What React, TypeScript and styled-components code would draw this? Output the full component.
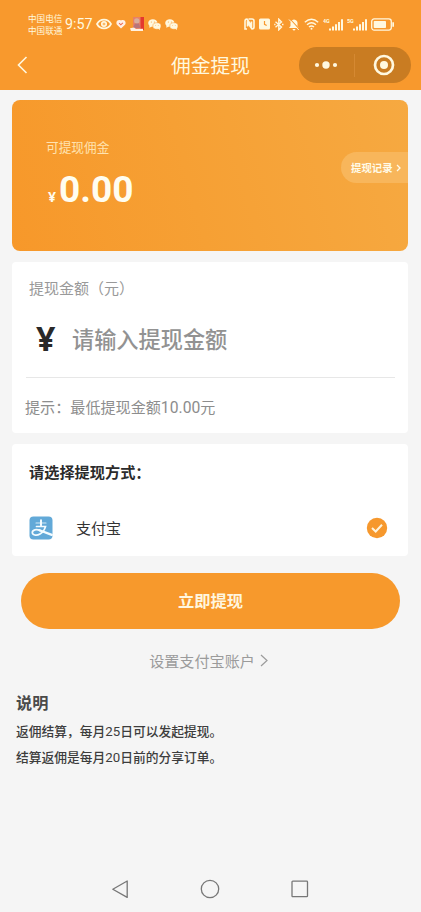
import React from 'react';
import styled, { createGlobalStyle } from 'styled-components';

const Global = createGlobalStyle`
  * { box-sizing: border-box; }
  body {
    margin: 0;
    background: #f5f5f5;
    font-family: "Noto Sans CJK SC", sans-serif;
  }
`;

const Screen = styled.div`
  width: 421px;
  height: 912px;
  display: flex;
  flex-direction: column;
  overflow: hidden;
  background: #f5f5f5;
`;

const Header = styled.header`
  height: 90px;
  flex: none;
  background: #f8992d;
  color: #fff8df;
`;

const StatusBar = styled.div`
  height: 40px;
  padding: 8px 27px 0 28px;
  display: flex;
  justify-content: space-between;
`;

const StatusGroup = styled.div<{ $gap: number }>`
  height: 32px;
  display: flex;
  align-items: center;
  gap: ${p => p.$gap}px;
  svg { flex: none; display: block; }
`;

const Carriers = styled.div`
  width: 35px;
  font-size: 8.6px;
  line-height: 12.5px;
  white-space: nowrap;
`;

const Clock = styled.span`
  width: 29px;
  font: 400 14.3px/20px Roboto, sans-serif;
  white-space: nowrap;
`;

const TitleBar = styled.div`
  height: 50px;
  padding: 0 10px 0 17px;
  display: grid;
  grid-template-columns: 1fr auto 1fr;
  align-items: center;
  svg { display: block; }
`;

const Title = styled.h1`
  margin: 0;
  padding-right: 7px;
  font-size: 19.8px;
  line-height: 30px;
  font-weight: 400;
`;

const Capsule = styled.div`
  justify-self: end;
  width: 112px;
  height: 36px;
  border-radius: 18px;
  background: #c97c22;
  display: flex;
  align-items: center;
`;

const CapsuleHalf = styled.div`
  flex: 1;
  display: flex;
  justify-content: center;
  & + & {
    border-left: 1px solid #d58932;
    height: 23px;
    align-items: center;
    padding-left: 2px;
  }
`;

const Content = styled.main`
  flex: 1;
  padding: 10px 13px 0 12px;
  display: flex;
  flex-direction: column;
`;

const BalanceCard = styled.section`
  height: 151px;
  border-radius: 8px;
  background: linear-gradient(75deg, #f7982a 0%, #f6a034 45%, #f6a941 100%);
  padding-left: 34px;
  display: flex;
  justify-content: space-between;
`;

const Balance = styled.div`
  padding-top: 37px;
  color: #fff;
`;

const BalanceLabel = styled.div`
  font-size: 12.7px;
  line-height: 20px;
  color: #ffe3b0;
`;

const Amount = styled.div`
  display: flex;
  align-items: baseline;
  margin-top: 8px;
  padding-left: 2px;
  font: 700 37px/50px Roboto, sans-serif;
  color: #fffdf0;
`;

const SmallYen = styled.span`
  width: 11px;
  font-family: "Noto Sans", sans-serif;
  font-size: 14px;
  line-height: 20px;
`;

const Records = styled.button`
  margin: 52px 0 0;
  border: 0;
  width: 67px;
  height: 31px;
  padding: 0 0 0 10px;
  border-radius: 16px 0 0 16px;
  background: #f8b65b;
  color: #fffbe8;
  font: 700 10.4px/20px "Noto Sans CJK SC", sans-serif;
  display: flex;
  align-items: center;
  gap: 3px;
  white-space: nowrap;
`;

const Panel = styled.section<{ $height: number }>`
  margin-top: 11px;
  height: ${p => p.$height}px;
  border-radius: 4px;
  background: #fff;
`;

const FieldLabel = styled.div`
  padding: 14px 0 0 17px;
  font-size: 15px;
  line-height: 24px;
  color: #999;
`;

const FieldRow = styled.div`
  height: 78px;
  margin: 0 13px 0 14px;
  padding: 0 0 2px 10px;
  border-bottom: 1px solid #e7e7e7;
  display: flex;
  align-items: center;
`;

const Yen = styled.span`
  width: 36px;
  font: 700 34px/40px "Noto Sans", sans-serif;
  color: #292929;
`;

const Placeholder = styled.span`
  font-size: 22.2px;
  line-height: 34px;
  font-weight: 500;
  color: #929292;
`;

const Hint = styled.div`
  padding: 16px 0 0 13px;
  font-size: 15.1px;
  line-height: 24px;
  color: #8d8d8d;
`;

const Digits = styled.span`
  font-family: Roboto, sans-serif;
  font-size: 1.04em;
  font-weight: 400;
  line-height: 1;
`;

const MethodTitle = styled.h2`
  margin: 0;
  padding: 15px 0 0 17px;
  font-size: 15.2px;
  line-height: 24px;
  font-weight: 700;
  color: #2b2b2b;
`;

const Method = styled.div`
  height: 24px;
  margin-top: 33px;
  padding: 0 20px 0 17px;
  display: flex;
  align-items: center;
  font-size: 15px;
  color: #333;
  svg { display: block; flex: none; }
`;

const MethodName = styled.span`
  flex: 1;
  padding-left: 23px;
  line-height: 24px;
`;

const Submit = styled.button`
  margin: 17px 8px 0 9px;
  height: 56px;
  flex: none;
  border: 0;
  border-radius: 28px;
  background: #f7992c;
  color: #fff6df;
  padding: 0 0 2px;
  font: 700 16.3px/24px "Noto Sans CJK SC", sans-serif;
`;

const AccountLink = styled.div`
  margin-top: 19px;
  height: 24px;
  display: flex;
  justify-content: center;
  align-items: center;
  gap: 5px;
  font-size: 15.1px;
  line-height: 24px;
  color: #9b9b9b;
  padding-right: 3px;
`;

const Notes = styled.section`
  padding: 17px 0 0 4px;
  color: #3d3d3d;
`;

const NotesTitle = styled.h2`
  margin: 0 0 3px;
  font-size: 16.2px;
  line-height: 26px;
  font-weight: 700;
  color: #4a4a4a;
`;

const Note = styled.p`
  margin: 0;
  font-size: 12.75px;
  line-height: 26px;
  font-weight: 500;
`;

const SystemNav = styled.nav`
  height: 46px;
  flex: none;
  display: flex;
  justify-content: center;
  gap: 70px;
  padding: 13px 2px 0 0;
`;

const Chevron = ({ w, h, stroke }: { w: number; h: number; stroke: number }) => (
  <svg width={w} height={h} viewBox={`0 0 ${w} ${h}`} fill="none" stroke="currentColor" strokeWidth={stroke}>
    <path d={`M1 1 L${w - 1} ${h / 2} L1 ${h - 1}`} />
  </svg>
);

const Eye = () => (
  <svg width="16" height="12" viewBox="0 0 16 12" fill="none" stroke="currentColor" strokeWidth="1.7">
    <path d="M1 6C4 .2 12 .2 15 6C12 11.8 4 11.8 1 6Z" />
    <circle cx="8" cy="6" r="2.2" />
    <circle cx="8" cy="6" r=".7" fill="currentColor" stroke="none" />
  </svg>
);

const Heart = () => (
  <svg width="10" height="10" viewBox="0 0 10 10">
    <path d="M5 9.5L1 5.7C-.7 3.5 1.4-.2 5 1.6C8.6-.2 10.7 3.5 9 5.7Z" fill="#fff0e5" />
    <path d="M3.1 4.2L4.8 5.8L6.9 3.8" fill="none" stroke="#ef6d55" strokeWidth="1.1" />
  </svg>
);

const AppBadge = () => (
  <svg width="14" height="14" viewBox="0 0 14 14">
    <path d="M3 0H14V12H3Z" fill="#e98065" />
    <path d="M10.5 0H14V13H10.5Z" fill="#e4392e" />
    <circle cx="6.8" cy="4" r="2.7" fill="#d8ad9c" />
    <path d="M3 11L5 6.5H9L10.5 11Z" fill="#b97579" />
    <path d="M0 11.3L4 10.5L6 12L13 11.7V14H1Z" fill="#fff1df" />
  </svg>
);

const Chat = () => (
  <svg width="13" height="11" viewBox="0 0 13 11">
    <ellipse cx="4.8" cy="4" rx="4.6" ry="3.8" fill="currentColor" />
    <path d="M1.5 6L1.3 8.8L4 7.4Z" fill="currentColor" />
    <ellipse cx="8.9" cy="7" rx="4.1" ry="3.3" fill="currentColor" stroke="#f8992d" strokeWidth=".5" />
    <path d="M10 9.5L11.9 10.9L11.8 8.8Z" fill="currentColor" />
    <g fill="#f8992d">
      <circle cx="3.3" cy="3" r=".5" />
      <circle cx="6.3" cy="3" r=".5" />
      <circle cx="7.7" cy="6.3" r=".4" />
      <circle cx="10.2" cy="6.3" r=".4" />
    </g>
  </svg>
);

const Nfc = () => (
  <svg width="11" height="12" viewBox="0 0 11 12" fill="none" stroke="currentColor" strokeWidth="1.6">
    <path d="M3 11H1V3.2Q1 1 3 1L7.5 7.8V3.4M4.5 1H8Q10 1 10 3V9Q10 11 8 11L3.5 4.8V8.6" />
  </svg>
);

const Alarm = () => (
  <svg width="11" height="12" viewBox="0 0 11 12">
    <rect y=".5" width="11" height="11" rx="1.5" fill="currentColor" />
    <path d="M5.5 3V6.3L7.7 7.5" fill="none" stroke="#f8992d" strokeWidth="1.2" />
  </svg>
);

const Bluetooth = () => (
  <svg width="10" height="13" viewBox="0 0 10 13" fill="none" stroke="currentColor" strokeWidth="1.4">
    <path d="M1.5 3.8L7.5 9L4.8 11.8V1.2L7.5 4L1.5 9.2" />
    <path d="M.2 6.5H1.5M8 6.5H9.5" />
  </svg>
);

const BellOff = () => (
  <svg width="12" height="13" viewBox="0 0 12 13">
    <path d="M1 10L2.5 8V5Q2.5 2 6 1.5Q9.5 2 9.5 5V8L11 10ZM4.5 11H7.5Q7.2 12.5 6 12.5Q4.8 12.5 4.5 11Z" fill="currentColor" />
    <path d="M2 1L11.5 11.2" stroke="#f8992d" strokeWidth="1.1" />
    <path d="M1 1.5L10.8 12" stroke="currentColor" strokeWidth="1" />
  </svg>
);

const Wifi = () => (
  <svg width="15" height="12" viewBox="0 0 15 12" fill="none" stroke="currentColor" strokeWidth="1.4">
    <path d="M.8 4.3Q7.5-1.8 14.2 4.3M3 6.8Q7.5 2.8 12 6.8M5 9.1Q7.5 6.8 10 9.1" />
    <circle cx="7.5" cy="10.8" r="1" fill="currentColor" stroke="none" />
  </svg>
);

const Signal = ({ label }: { label: string }) => (
  <svg width="20" height="13" viewBox="0 0 20 13" fill="currentColor">
    <text x="0" y="5" fontSize="5.4" fontWeight="700" fontFamily="Roboto, sans-serif">{label}</text>
    <path d="M6 10.5H8V12.5H6ZM9 8.5H11V12.5H9ZM12 6.3H14V12.5H12ZM15 4H17V12.5H15ZM18 1.3H20V12.5H18Z" />
  </svg>
);

const Battery = () => (
  <svg width="23" height="13" viewBox="0 0 23 13">
    <rect x=".7" y=".9" width="19.6" height="11.2" rx="2.5" fill="none" stroke="currentColor" strokeWidth="1.3" />
    <rect x="2.7" y="3" width="12.3" height="7" rx=".8" fill="currentColor" />
    <path d="M21.3 4.2H23V8.8H21.3Z" fill="currentColor" />
  </svg>
);

const Alipay = () => (
  <svg width="24" height="24" viewBox="0 0 24 24">
    <rect x=".5" y=".5" width="23" height="23" rx="4" fill="#62a9d8" />
    <g fill="none" stroke="#f4fcff" strokeLinecap="round">
      <path d="M12 4.2V9.5" strokeWidth="2" />
      <path d="M7 7H17" strokeWidth="1.1" strokeOpacity=".8" />
      <path d="M7.5 10.5H16.5Q15 15.7 11 18C7.3 20.2 3.2 19 3.3 16.4C3.5 13.5 7.5 13 11.3 14.6" strokeWidth="1.7" />
      <path d="M10.5 14.2L22.8 18.9" strokeWidth="2.3" />
    </g>
  </svg>
);

export default function App() {
  return (
    <Screen>
      <Global />
      <Header>
        <StatusBar>
          <StatusGroup $gap={2}>
            <Carriers>中国电信<br />中国联通</Carriers>
            <Clock>9:57</Clock>
            <StatusGroup $gap={4}>
              <Eye /><Heart /><AppBadge /><Chat /><Chat />
            </StatusGroup>
          </StatusGroup>
          <StatusGroup $gap={4}>
            <Nfc /><Alarm /><Bluetooth /><BellOff /><Wifi />
            <Signal label="4G" /><Signal label="5G" /><Battery />
          </StatusGroup>
        </StatusBar>
        <TitleBar>
          <svg width="11" height="18" viewBox="0 0 11 18" fill="none" stroke="currentColor" strokeWidth="1.6">
            <path d="M9.5 1L1.5 9L9.5 17" />
          </svg>
          <Title>佣金提现</Title>
          <Capsule>
            <CapsuleHalf>
              <svg width="24" height="10" viewBox="0 0 24 10" fill="currentColor">
                <circle cx="3" cy="5" r="2.1" /><circle cx="12" cy="5" r="3.7" /><circle cx="21" cy="5" r="2.1" />
              </svg>
            </CapsuleHalf>
            <CapsuleHalf>
              <svg width="22" height="22" viewBox="0 0 22 22">
                <circle cx="11" cy="11" r="9" fill="none" stroke="currentColor" strokeWidth="2.7" />
                <circle cx="11" cy="11" r="4" fill="currentColor" />
              </svg>
            </CapsuleHalf>
          </Capsule>
        </TitleBar>
      </Header>

      <Content>
        <BalanceCard>
          <Balance>
            <BalanceLabel>可提现佣金</BalanceLabel>
            <Amount><SmallYen>¥</SmallYen>0.00</Amount>
          </Balance>
          <Records>提现记录<Chevron w={5} h={8} stroke={1.3} /></Records>
        </BalanceCard>

        <Panel $height={171}>
          <FieldLabel>提现金额（元）</FieldLabel>
          <FieldRow>
            <Yen>¥</Yen>
            <Placeholder>请输入提现金额</Placeholder>
          </FieldRow>
          <Hint>提示：最低提现金额<Digits>10.00</Digits>元</Hint>
        </Panel>

        <Panel $height={112}>
          <MethodTitle>请选择提现方式：</MethodTitle>
          <Method>
            <Alipay />
            <MethodName>支付宝</MethodName>
            <svg width="22" height="22" viewBox="0 0 22 22">
              <circle cx="11" cy="11" r="10.2" fill="#f6982d" />
              <path d="M6 11L9.7 14.5L16 7.8" fill="none" stroke="#fff4dc" strokeWidth="2" />
            </svg>
          </Method>
        </Panel>

        <Submit>立即提现</Submit>
        <AccountLink>设置支付宝账户<Chevron w={8} h={13} stroke={1.2} /></AccountLink>
        <Notes>
          <NotesTitle>说明</NotesTitle>
          <Note>返佣结算，每月<Digits>25</Digits>日可以发起提现。</Note>
          <Note>结算返佣是每月<Digits>20</Digits>日前的分享订单。</Note>
        </Notes>
      </Content>

      <SystemNav>
        <svg width="20" height="20" viewBox="0 0 20 20" fill="none" stroke="#777" strokeWidth="1.3" strokeLinejoin="round">
          <path d="M17.2 2V18.4L2.8 10.2Z" />
        </svg>
        <svg width="20" height="20" viewBox="0 0 20 20" fill="none" stroke="#777" strokeWidth="1.3">
          <circle cx="10" cy="10" r="8.7" />
        </svg>
        <svg width="20" height="20" viewBox="0 0 20 20" fill="none" stroke="#777" strokeWidth="1.3">
          <rect x="2" y="2.2" width="15.5" height="15.5" rx=".8" />
        </svg>
      </SystemNav>
    </Screen>
  );
}
